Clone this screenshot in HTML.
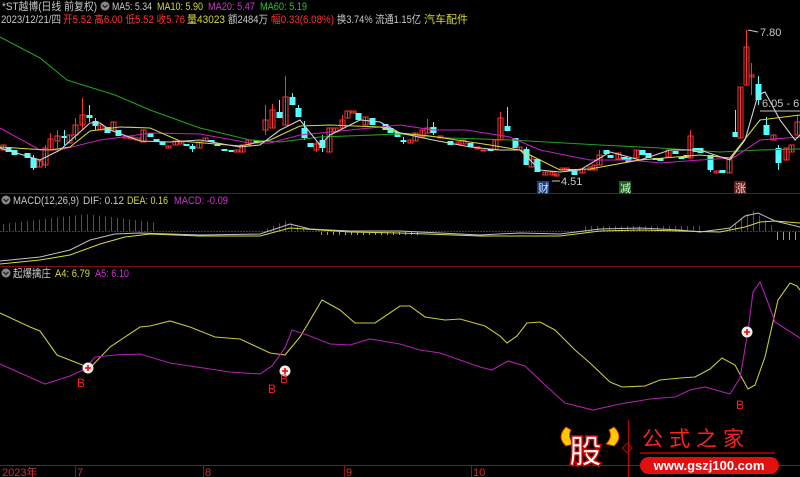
<!DOCTYPE html>
<html><head><meta charset="utf-8"><style>
html,body{margin:0;padding:0;background:#000;width:800px;height:477px;overflow:hidden}
svg{display:block}
text{font-family:"Liberation Sans","Noto Sans CJK SC",sans-serif}
</style></head><body>
<svg id="s" width="800" height="477" viewBox="0 0 800 477" xmlns="http://www.w3.org/2000/svg">
<rect width="800" height="477" fill="#000"/>
<g font-size="11">
<text x="2" y="10" fill="#c8c8c8" textLength="95" lengthAdjust="spacingAndGlyphs">*ST越博(日线 前复权)</text>
<circle cx="105" cy="6" r="4.5" fill="#888"/><path d="M102.5 5 L105 7.5 L107.5 5" stroke="#222" fill="none" stroke-width="1.3"/>
<text x="112" y="10" fill="#c8c8c8" textLength="40" lengthAdjust="spacingAndGlyphs">MA5: 5.34</text>
<text x="157" y="10" fill="#d8d840" textLength="46" lengthAdjust="spacingAndGlyphs">MA10: 5.90</text>
<text x="208" y="10" fill="#d030d0" textLength="47" lengthAdjust="spacingAndGlyphs">MA20: 5.47</text>
<text x="260" y="10" fill="#30c030" textLength="47" lengthAdjust="spacingAndGlyphs">MA60: 5.19</text>
<text x="1" y="23" fill="#c8c8c8" textLength="60" lengthAdjust="spacingAndGlyphs">2023/12/21/四</text>
<text x="63" y="23" fill="#ff3030" textLength="122" lengthAdjust="spacingAndGlyphs">开5.52 高6.00 低5.52 收5.76</text>
<text x="187" y="23" fill="#d8d840" textLength="38" lengthAdjust="spacingAndGlyphs">量43023</text>
<text x="228" y="23" fill="#c8c8c8" textLength="40" lengthAdjust="spacingAndGlyphs">额2484万</text>
<text x="271" y="23" fill="#ff3030" textLength="63" lengthAdjust="spacingAndGlyphs">幅0.33(6.08%)</text>
<text x="337" y="23" fill="#c8c8c8" textLength="84" lengthAdjust="spacingAndGlyphs">换3.74% 流通1.15亿</text>
<text x="424" y="23" fill="#d8d840" textLength="44" lengthAdjust="spacingAndGlyphs">汽车配件</text>
</g>
<line x1="0" y1="193.5" x2="800" y2="193.5" stroke="#801010"/>
<line x1="0" y1="266.5" x2="800" y2="266.5" stroke="#801010"/>
<g font-size="11">
<circle cx="6" cy="200" r="4.5" fill="#888"/><path d="M3.5 199 L6 201.5 L8.5 199" stroke="#222" fill="none" stroke-width="1.3"/>
<text x="13" y="204" fill="#c8c8c8" textLength="66" lengthAdjust="spacingAndGlyphs">MACD(12,26,9)</text>
<text x="83" y="204" fill="#c8c8c8" textLength="41" lengthAdjust="spacingAndGlyphs">DIF: 0.12</text>
<text x="127" y="204" fill="#d8d840" textLength="41" lengthAdjust="spacingAndGlyphs">DEA: 0.16</text>
<text x="174" y="204" fill="#d030d0" textLength="54" lengthAdjust="spacingAndGlyphs">MACD: -0.09</text>
<circle cx="6" cy="273" r="4.5" fill="#888"/><path d="M3.5 272 L6 274.5 L8.5 272" stroke="#222" fill="none" stroke-width="1.3"/>
<text x="13" y="277" fill="#c8c8c8" textLength="38" lengthAdjust="spacingAndGlyphs">起爆擒庄</text>
<text x="55" y="277" fill="#d8d840" textLength="35" lengthAdjust="spacingAndGlyphs">A4: 6.79</text>
<text x="95" y="277" fill="#d030d0" textLength="34" lengthAdjust="spacingAndGlyphs">A5: 6.10</text>
</g>
<line x1="0" y1="231.5" x2="800" y2="231.5" stroke="#802020" stroke-dasharray="2,1"/>
<g id="macd"></g>
<g id="candles"></g>
<g fill="none" stroke-width="1.1">
<polyline stroke="#20a020" points="0,37 40,58 67,80 115,95 150,110 200,128 250,140 280,142 320,137 400,134 450,138 511,140 600,145 660,148 720,152 760,150 800,149"/>
<polyline stroke="#c020c0" points="0,128 40,150 60,150 100,140 130,136 150,133 200,134 250,143 270,143 300,135 350,130 400,125 433,130 466,130 510,137 540,150 590,160 630,160 660,163 700,160 733,158 760,140 800,137"/>
<polyline stroke="#d8d840" points="0,147 30,149 50,150 70,147 90,131 120,127 150,128 180,141 240,146 270,140 300,126 330,125 380,127 400,133 430,136 490,145 520,150 560,170 590,169 640,160 700,155 730,158 760,120 800,115"/>
<polyline stroke="#d0d0d0" points="0,148 40,160 60,150 90,123 100,123 110,130 140,141 170,142 200,140 240,147 260,145 280,130 300,120 320,145 330,135 360,120 380,122 400,133 433,140 470,147 500,150 520,150 540,170 560,172 580,170 610,152 640,160 670,150 700,150 730,160 745,140 758,95 765,92 780,120 795,140 800,135"/>
</g>
<g font-size="11" fill="#c8c8c8">
<path d="M748 30 L758 32" stroke="#c8c8c8"/><text x="760" y="36">7.80</text>
<text x="762" y="107">6.05 - 6.0</text>
<line x1="760" y1="111" x2="800" y2="111" stroke="#c8c8c8"/>
<path d="M552 181 L560 181" stroke="#c8c8c8"/><text x="561" y="185">4.51</text>
</g>
<rect x="537" y="181" width="12" height="12" fill="#204080"/><text x="538" y="192" font-size="11" fill="#c8e0ff">财</text>
<rect x="619" y="181" width="12" height="12" fill="#206020"/><text x="620" y="192" font-size="11" fill="#c8ffc8">减</text>
<rect x="734" y="181" width="12" height="12" fill="#602020"/><text x="735" y="192" font-size="11" fill="#ffc8c8">涨</text>
<g fill="none" stroke-width="1.1">
<polyline stroke="#c8c840" points="0,313 30,327 40,331 57,355 85,366 90,368 110,347 140,327 150,326 170,321 190,327 215,337 240,339 270,353 285,355 300,337 322,300 340,310 355,323 375,323 400,306 410,306 425,317 445,320 460,319 485,326 500,336 507,343 517,336 527,323 540,322 555,330 575,350 590,363 610,382 622,387 645,386 660,380 680,378 695,377 710,369 722,358 735,365 742,378 748,389 755,385 765,357 778,300 790,283 797,286 800,290"/>
<polyline stroke="#b020b0" points="0,364 45,384 70,376 85,369 95,357 115,355 140,354 170,363 190,366 230,372 260,374 272,366 285,348 292,330 310,336 330,344 350,345 370,339 400,344 420,350 440,353 460,360 480,367 492,370 508,361 525,366 545,385 565,403 593,410 620,404 650,399 675,397 690,390 705,387 730,394 740,378 748,331 753,292 760,282 767,300 775,322 800,338"/>
</g>
<g>
<circle cx="88" cy="368" r="5.5" fill="#eee"/><path d="M85 368h6M88 365v6" stroke="#e00" stroke-width="1.6"/>
<circle cx="285" cy="371" r="5.5" fill="#eee"/><path d="M282 371h6M285 368v6" stroke="#e00" stroke-width="1.6"/>
<circle cx="747" cy="332" r="5.5" fill="#eee"/><path d="M744 332h6M747 329v6" stroke="#e00" stroke-width="1.6"/>
</g>
<g font-size="12" fill="#ff2020">
<text x="77" y="387">B</text><text x="268" y="393">B</text><text x="280" y="383">B</text><text x="736" y="409">B</text>
</g>
<line x1="0" y1="465.5" x2="800" y2="465.5" stroke="#901010"/>
<g stroke="#901010">
<line x1="75.5" y1="465" x2="75.5" y2="477"/><line x1="203.5" y1="465" x2="203.5" y2="477"/><line x1="344.5" y1="465" x2="344.5" y2="477"/><line x1="471.5" y1="465" x2="471.5" y2="477"/>
</g>
<g font-size="11" fill="#d03030">
<text x="2" y="476">2023年</text><text x="77" y="476">7</text><text x="205" y="476">8</text><text x="346" y="476">9</text><text x="473" y="476">10</text>
</g>
<path d="M566 427 Q556 437 566 446 L574 444 Q567 437 571 430 Z" fill="#ffcc00" stroke="#e03000"/>
<path d="M614 427 Q624 437 614 446 L606 444 Q613 437 609 430 Z" fill="#ffcc00" stroke="#e03000"/>
<text x="569" y="463" font-size="33" font-weight="bold" fill="#fff" stroke="#d00000" stroke-width="1.5" font-family="'Noto Sans CJK SC',sans-serif">股</text>
<line x1="628.5" y1="420" x2="628.5" y2="477" stroke="#c00000"/>
<rect x="624" y="445" width="7" height="7" transform="rotate(45 628 448)" fill="none" stroke="#d00000"/>
<text x="642" y="446" font-size="21" fill="#ff2020" font-family="'Noto Serif CJK SC',serif" letter-spacing="6">公式之家</text>
<line x1="640" y1="453" x2="775" y2="453" stroke="#c00000" stroke-width="1.5"/>
<rect x="640" y="457" width="139" height="17" rx="8.5" fill="#e01010"/>
<text x="709" y="470" font-size="13" font-weight="bold" fill="#fff" text-anchor="middle">www.gszj100.com</text>
</svg>
<script>
var NS="http://www.w3.org/2000/svg";
function el(p,t,a){var e=document.createElementNS(NS,t);for(var k in a)e.setAttribute(k,a[k]);p.appendChild(e);return e;}
var C=[["r",3,145,150],["c",8,147,152],["c",14,150,155],["c",27,153,158],["c",33,158,168,155,170],["r",39,161,167],["r",45,148,165,145,168],["r",50,139,150,133,150],["r",57,136,141,130,148],["c",64,136,138,130,145],["r",69,135,143],["r",75,125,135,118,140],["r",82,115,125,98,130],["c",89,115,118,105,122],["c",95,121,126,118,130],["r",100,125,130],["c",107,127,133],["r",113,122,130],["c",118,130,136],["r",125,136,138],["r",131,137,139],["r",137,138,140],["r",143,130,142],["c",150,133,137],["c",156,139,142],["c",162,142,145],["r",168,146,148],["r",175,141,145],["r",181,142,144],["c",186,144,146],["c",192,146,149,144,152],["r",199,142,148],["r",205,138,141],["c",211,140,142],["c",217,144,146],["c",224,149,151],["c",231,150,152],["r",236,150,152],["r",242,145,152],["r",248,140,145],["c",256,140,143],["r",265,120,130,105,135],["r",272,110,128,104,128],["c",279,112,118,100,118],["r",285,97,125,76,125],["c",292,97,105,93,105],["c",298,108,117,105,117],["c",304,128,138,121,140],["c",310,143,147],["r",316,144,150,140,152],["c",322,140,148,135,152],["r",329,128,152],["r",335,128,132],["r",342,120,128,115,128],["r",347,111,118],["r",353,111,113],["c",358,113,120],["r",365,117,125],["c",372,118,125],["c",385,124,130],["c",390,128,133],["c",397,132,137],["c",403,140,142,137,144],["r",410,140,143],["r",415,133,141],["r",422,130,137],["r",427,128,133,119,133],["c",433,127,133,122,135],["r",440,136,138],["c",450,141,145],["r",458,142,144],["r",463,140,144],["c",470,143,147],["r",477,147,149],["r",483,150,151],["c",490,149,151],["r",495,140,150],["r",500,118,140,112,140],["c",507,126,131,107,131],["c",515,138,148],["r",519,147,150],["c",526,149,165,147,165],["r",531,159,167,155,167],["c",537,159,172],["r",545,172,175],["r",552,172,175],["r",556,174,176],["r",562,168,170],["r",566,168,170],["c",570,169,171],["c",574,171,175],["r",582,169,173],["r",590,167,170],["r",594,165,170],["r",599,155,165,150,165],["c",606,150,154],["c",610,155,158],["r",618,153,159],["c",624,157,160],["c",628,158,162],["r",636,150,158],["c",642,150,155],["c",648,153,158],["c",655,158,160],["c",660,158,161],["r",668,150,157],["c",675,151,154],["c",681,157,159],["c",686,155,158],["r",690,136,158,130,158],["c",695,148,152],["c",700,148,153],["c",710,155,170,155,172],["r",716,171,173],["c",722,170,173],["r",729,158,173],["c",735,132,137,110,137],["r",740,87,138],["r",746,47,85,30,85],["r",751,75,77,63,95],["c",758,84,100,76,105],["c",766,125,135,117,135],["r",773,135,140],["c",778,148,163,145,170],["r",786,148,160],["r",791,145,152],["r",797,122,135,115,135]];
var g=document.getElementById("candles");
C.forEach(function(c){var t=c[0],x=c[1],o=c[2],cl=c[3],h=c.length>4?c[4]:o,l=c.length>5?c[5]:cl;
 var col=t=="r"?"#ff3232":"#54ffff";
 el(g,"line",{x1:x+0.5,y1:h,x2:x+0.5,y2:l,stroke:col});
 var hgt=Math.max(1,cl-o);
 if(t=="r")el(g,"rect",{x:x-2,y:o,width:5,height:hgt,fill:"none",stroke:col});
 else el(g,"rect",{x:x-2.5,y:o,width:6,height:hgt,fill:col});
});
var m=document.getElementById("macd");
for(var x=3;x<800;x+=6){var h=0;
 if(x<155){h=17-Math.abs(x-85)*0.12;}
 else if(x>260&&x<305){h=10-Math.abs(x-285)*0.4;}
 else if(x>580&&x<700){h=5;}
 else if(x>728&&x<775){h=21-Math.abs(x-752)*0.8;}
 else if((x>315&&x<420)||(x>775)){el(m,"rect",{x:x,y:232,width:1,height:3+(x>775?5:0),fill:"#40c0c0"});continue;}
 if(h>0.5)el(m,"rect",{x:x,y:231-h,width:1,height:h,fill:"#c02020"});}
el(m,"polyline",{fill:"none",stroke:"#c0c0c0",points:"0,261 40,257 70,250 90,240 115,234 140,233 200,235 260,234 290,224 310,229 350,231 400,231 440,233 480,235 520,233 560,234 600,229 640,228 680,230 700,232 730,228 745,216 758,213 775,221 800,227"});
el(m,"polyline",{fill:"none",stroke:"#d8d840",points:"0,264 40,260 70,255 100,244 125,237 150,234 200,236 260,236 290,228 320,230 350,232 400,233 480,236 560,236 600,231 640,230 680,231 720,232 745,227 760,222 775,221 800,223"});
</script>
</body></html>
